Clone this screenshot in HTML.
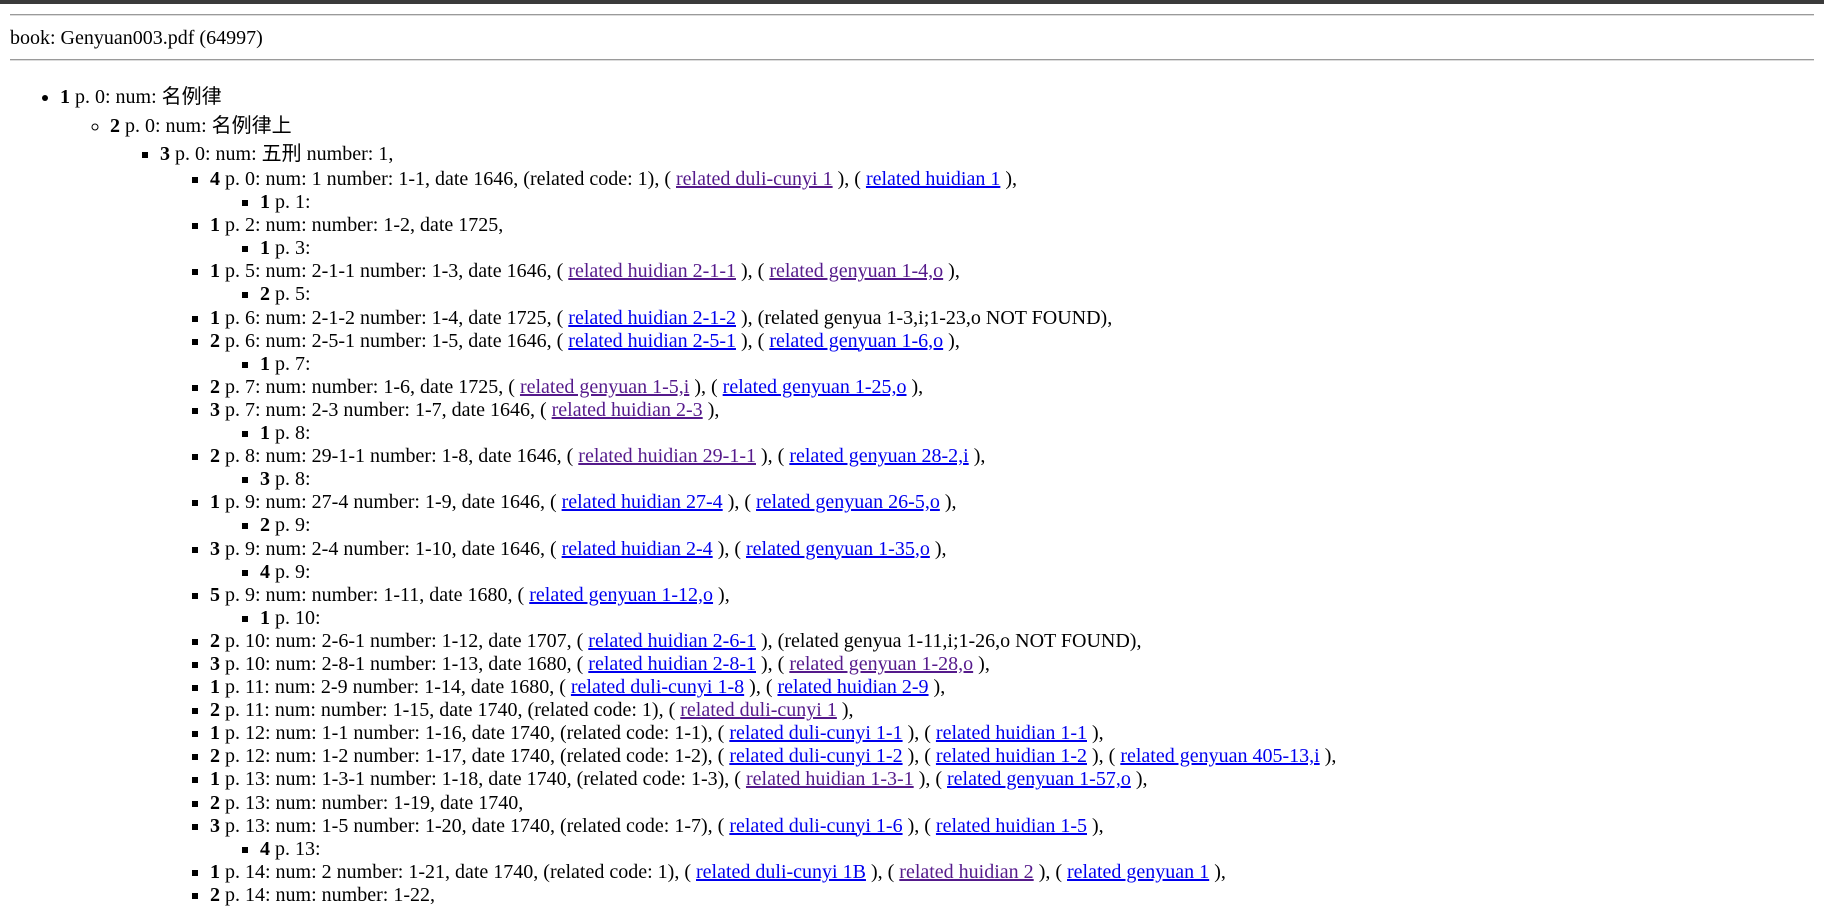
<!DOCTYPE html>
<html><head><meta charset="utf-8">
<style>
html,body{margin:0;padding:0;background:#fff;}
body{font-family:"Liberation Serif","Noto Sans CJK SC",serif;font-size:20px;color:#000;padding:0 10px;position:relative;}
.bar{position:absolute;left:0;top:0;width:1824px;height:4px;background:#3a3a3a;}
hr{border:0;border-top:1px solid #9a9a9a;border-bottom:1px solid #dcdcdc;height:0;margin:0;}
.h1{padding-top:14px;}
.title{height:23px;line-height:23px;margin:11px 0 9px;}
ul{margin:0;padding-left:50px;line-height:23.1px;}
ul.top{margin-top:22px;list-style:disc;}
ul.l2{list-style:circle;}
ul.l3,ul.l3 ul{list-style:square;}
.c1{line-height:29px;}
.c3{line-height:27px;}
a{color:#0000ee;text-decoration:underline;}
a.v{color:#551a8b;}
</style></head><body>
<div class="bar"></div>
<div class="h1"><hr></div>
<div class="title">book: Genyuan003.pdf (64997)</div>
<hr>
<ul class="top">
<li><div class="c1"><b>1</b> p. 0: num: 名例律</div>
<ul class="l2">
<li><div class="c1"><b>2</b> p. 0: num: 名例律上</div>
<ul class="l3">
<li><div class="c3"><b>3</b> p. 0: num: 五刑 number: 1,</div>
<ul>
<li><b>4</b> p. 0: num: 1 number: 1-1, date 1646, (related code: 1), ( <a class="v">related duli-cunyi 1</a> ), ( <a>related huidian 1</a> ),
<ul><li><b>1</b> p. 1:</li></ul></li>
<li><b>1</b> p. 2: num: number: 1-2, date 1725,
<ul><li><b>1</b> p. 3:</li></ul></li>
<li><b>1</b> p. 5: num: 2-1-1 number: 1-3, date 1646, ( <a class="v">related huidian 2-1-1</a> ), ( <a class="v">related genyuan 1-4,o</a> ),
<ul><li><b>2</b> p. 5:</li></ul></li>
<li><b>1</b> p. 6: num: 2-1-2 number: 1-4, date 1725, ( <a>related huidian 2-1-2</a> ), (related genyua 1-3,i;1-23,o NOT FOUND),</li>
<li><b>2</b> p. 6: num: 2-5-1 number: 1-5, date 1646, ( <a>related huidian 2-5-1</a> ), ( <a>related genyuan 1-6,o</a> ),
<ul><li><b>1</b> p. 7:</li></ul></li>
<li><b>2</b> p. 7: num: number: 1-6, date 1725, ( <a class="v">related genyuan 1-5,i</a> ), ( <a>related genyuan 1-25,o</a> ),</li>
<li><b>3</b> p. 7: num: 2-3 number: 1-7, date 1646, ( <a class="v">related huidian 2-3</a> ),
<ul><li><b>1</b> p. 8:</li></ul></li>
<li><b>2</b> p. 8: num: 29-1-1 number: 1-8, date 1646, ( <a class="v">related huidian 29-1-1</a> ), ( <a>related genyuan 28-2,i</a> ),
<ul><li><b>3</b> p. 8:</li></ul></li>
<li><b>1</b> p. 9: num: 27-4 number: 1-9, date 1646, ( <a>related huidian 27-4</a> ), ( <a>related genyuan 26-5,o</a> ),
<ul><li><b>2</b> p. 9:</li></ul></li>
<li><b>3</b> p. 9: num: 2-4 number: 1-10, date 1646, ( <a>related huidian 2-4</a> ), ( <a>related genyuan 1-35,o</a> ),
<ul><li><b>4</b> p. 9:</li></ul></li>
<li><b>5</b> p. 9: num: number: 1-11, date 1680, ( <a>related genyuan 1-12,o</a> ),
<ul><li><b>1</b> p. 10:</li></ul></li>
<li><b>2</b> p. 10: num: 2-6-1 number: 1-12, date 1707, ( <a>related huidian 2-6-1</a> ), (related genyua 1-11,i;1-26,o NOT FOUND),</li>
<li><b>3</b> p. 10: num: 2-8-1 number: 1-13, date 1680, ( <a>related huidian 2-8-1</a> ), ( <a class="v">related genyuan 1-28,o</a> ),</li>
<li><b>1</b> p. 11: num: 2-9 number: 1-14, date 1680, ( <a>related duli-cunyi 1-8</a> ), ( <a>related huidian 2-9</a> ),</li>
<li><b>2</b> p. 11: num: number: 1-15, date 1740, (related code: 1), ( <a class="v">related duli-cunyi 1</a> ),</li>
<li><b>1</b> p. 12: num: 1-1 number: 1-16, date 1740, (related code: 1-1), ( <a>related duli-cunyi 1-1</a> ), ( <a>related huidian 1-1</a> ),</li>
<li><b>2</b> p. 12: num: 1-2 number: 1-17, date 1740, (related code: 1-2), ( <a>related duli-cunyi 1-2</a> ), ( <a>related huidian 1-2</a> ), ( <a>related genyuan 405-13,i</a> ),</li>
<li><b>1</b> p. 13: num: 1-3-1 number: 1-18, date 1740, (related code: 1-3), ( <a class="v">related huidian 1-3-1</a> ), ( <a>related genyuan 1-57,o</a> ),</li>
<li><b>2</b> p. 13: num: number: 1-19, date 1740,</li>
<li><b>3</b> p. 13: num: 1-5 number: 1-20, date 1740, (related code: 1-7), ( <a>related duli-cunyi 1-6</a> ), ( <a>related huidian 1-5</a> ),
<ul><li><b>4</b> p. 13:</li></ul></li>
<li><b>1</b> p. 14: num: 2 number: 1-21, date 1740, (related code: 1), ( <a>related duli-cunyi 1B</a> ), ( <a class="v">related huidian 2</a> ), ( <a>related genyuan 1</a> ),</li>
<li><b>2</b> p. 14: num: number: 1-22,</li>
</ul></li></ul></li></ul></li></ul>
</body></html>
